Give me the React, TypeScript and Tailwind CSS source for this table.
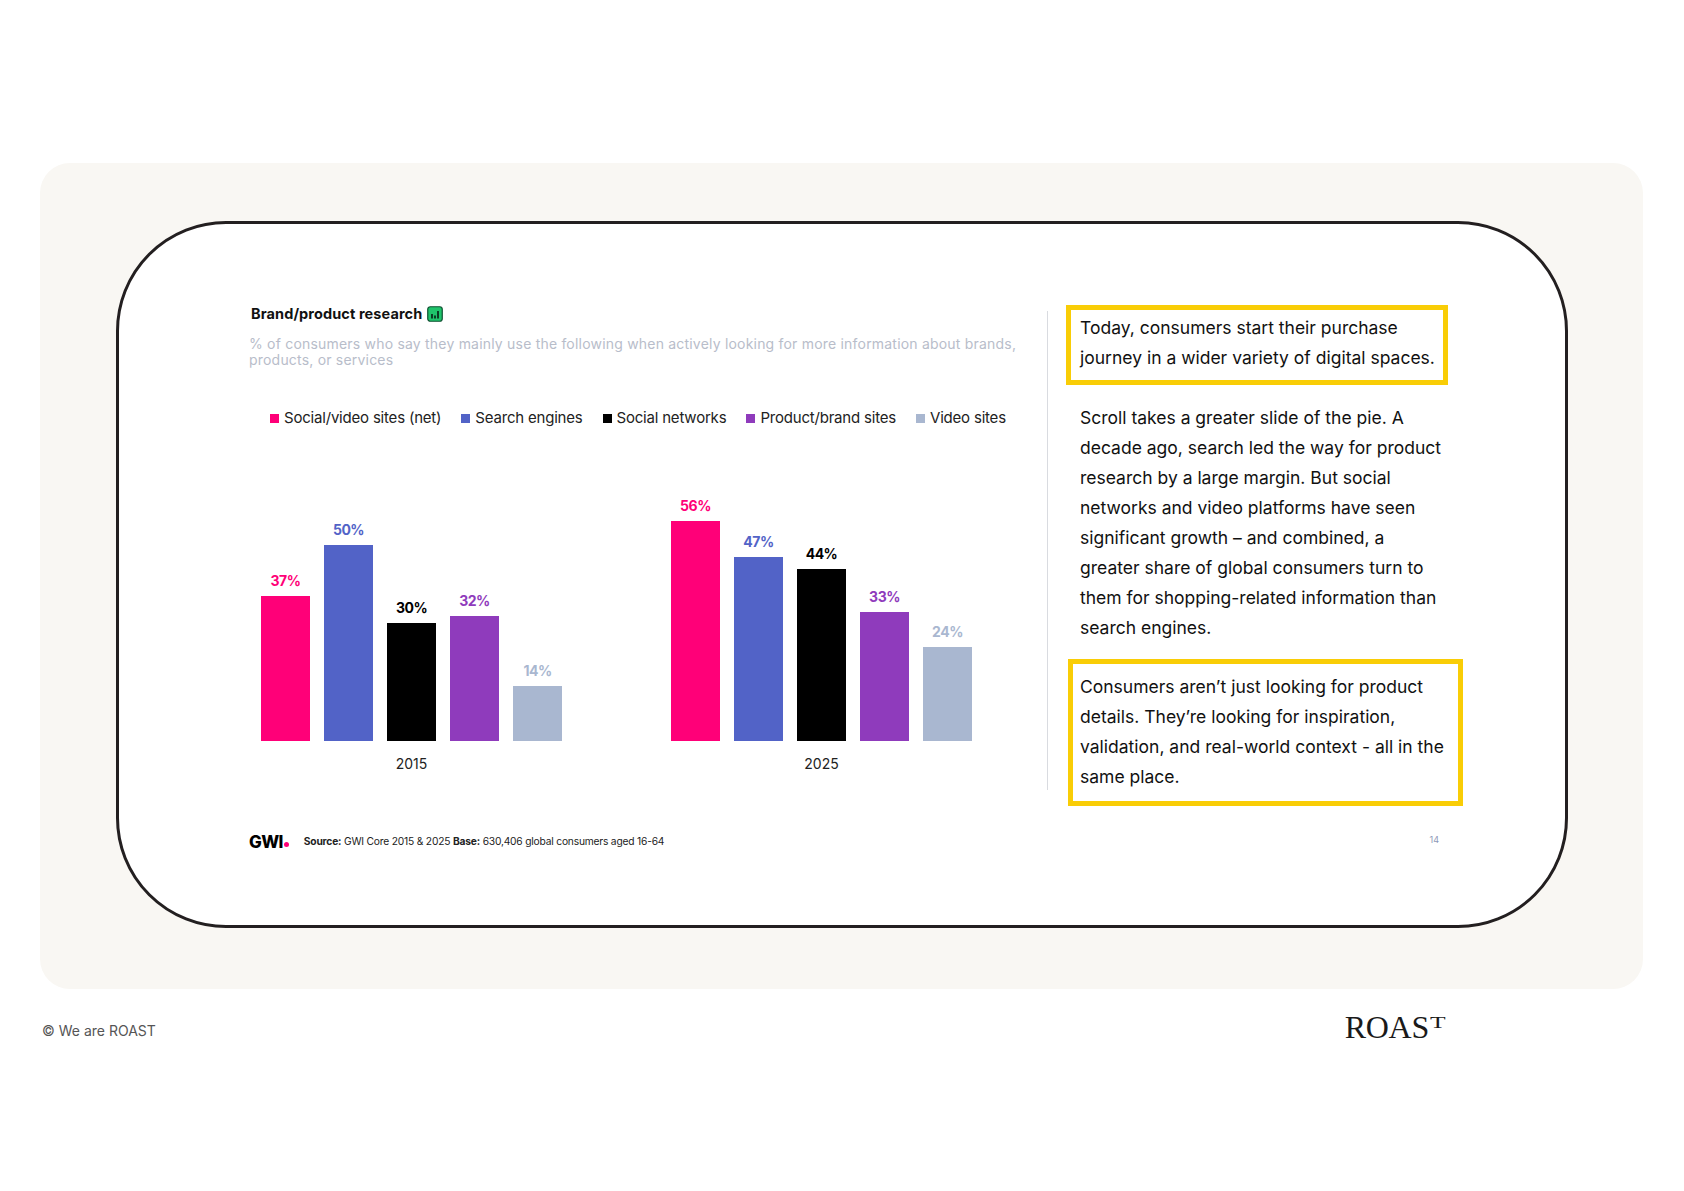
import React from "react";

const series = [
  { label: "Social/video sites (net)", color: "bg-[#ff0078]", text: "text-[#ff0078]" },
  { label: "Search engines", color: "bg-[#5263c7]", text: "text-[#5263c7]" },
  { label: "Social networks", color: "bg-black", text: "text-black" },
  { label: "Product/brand sites", color: "bg-[#8f3bbc]", text: "text-[#8f3bbc]" },
  { label: "Video sites", color: "bg-[#a9b7d0]", text: "text-[#a9b7d0]" },
];

const groups = [
  { year: "2015", values: [37, 50, 30, 32, 14] },
  { year: "2025", values: [56, 47, 44, 33, 24] },
];

const PX_PER_PCT = 3.92;

function ChartIcon() {
  return (
    <svg width="16" height="16" viewBox="0 0 16 16" className="ml-[5px]">
      <rect x="0.75" y="0.75" width="14.5" height="14.5" rx="2.5" fill="#1fc46b" stroke="#0f5132" strokeWidth="1.2" />
      <rect x="4" y="8" width="2" height="4.5" fill="#0b3d24" />
      <rect x="7" y="9.5" width="2" height="3" fill="#0b3d24" />
      <rect x="10" y="5" width="2" height="7.5" fill="#0b3d24" />
    </svg>
  );
}

function BarGroup({ year, values }: { year: string; values: number[] }) {
  return (
    <div className="flex flex-col items-center">
      <div className="flex items-end gap-[14px] h-[301px]">
        {values.map((v, i) => (
          <div key={i} className="flex flex-col items-center w-[49px]">
            <span className={`text-[14px] leading-[16px] font-bold tracking-[-0.5px] mb-[7px] ${series[i].text}`}>
              {v}%
            </span>
            <div className={`w-[49px] ${series[i].color}`} style={{ height: Math.round(v * PX_PER_PCT) }} />
          </div>
        ))}
      </div>
      <div className="mt-[14px] text-[14px] leading-[18px] text-[#222]">{year}</div>
    </div>
  );
}

export default function App() {
  return (
    <div className="w-[1684px] h-[1191px] bg-white pt-[163px] font-['Inter','Noto_Sans',sans-serif] text-[#111]">
      {/* beige frame */}
      <div className="ml-[40px] w-[1603px] h-[826px] bg-[#f9f7f3] rounded-[30px] pt-[58px] pl-[76px]">
        <div className="w-[1452px] h-[707px] bg-white border-[3px] border-[#231f20] rounded-[110px] pt-[80px] pl-[130px]">
          <div className="flex items-start">
            {/* chart column */}
            <div className="w-[781px]">
              <div className="flex items-center ml-[2px] h-[20px]">
                <span className="text-[14.5px] font-bold tracking-[0.1px] text-[#111]">Brand/product research</span>
                <ChartIcon />
              </div>
              <p className="mt-[12px] text-[14px] leading-[16px] text-[#b8bdca] tracking-[0.2px] whitespace-nowrap">
                % of consumers who say they mainly use the following when actively looking for more information about brands,
                <br />
                products, or services
              </p>
              <div className="mt-[40px] ml-[21px] flex items-center gap-[20px] h-[20px]">
                {series.map((s) => (
                  <div key={s.label} className="flex items-center gap-[5px]">
                    <span className={`w-[9px] h-[9px] ${s.color}`} />
                    <span className="text-[15px] text-[#222] tracking-[-0.2px]">{s.label}</span>
                  </div>
                ))}
              </div>
              <div className="mt-[12px] ml-[12px] flex gap-[109px]">
                {groups.map((g) => (
                  <BarGroup key={g.year} year={g.year} values={g.values} />
                ))}
              </div>
            </div>

            <div className="ml-[17px] mt-[7px] w-px h-[479px] bg-[#d9dbe0]" />

            {/* text column */}
            <div className="ml-[18px] mt-[1px] w-[397px] text-[17.5px] leading-[30px] tracking-[0px] text-[#111] whitespace-nowrap">
              <div className="w-[382px] border-[5px] border-[#f9cd06] pl-[9px] pt-[3px] pb-[7px]">
                Today, consumers start their purchase
                <br />
                journey in a wider variety of digital spaces.
              </div>
              <p className="mt-[18px] pl-[14px]">
                Scroll takes a greater slide of the pie. A
                <br />
                decade ago, search led the way for product
                <br />
                research by a large margin. But social
                <br />
                networks and video platforms have seen
                <br />
                significant growth – and combined, a
                <br />
                greater share of global consumers turn to
                <br />
                them for shopping-related information than
                <br />
                search engines.
              </p>
              <div className="mt-[16px] ml-[2px] w-[395px] border-[5px] border-[#f9cd06] pl-[7px] pt-[8px] pb-[9px]">
                Consumers aren’t just looking for product
                <br />
                details. They’re looking for inspiration,
                <br />
                validation, and real-world context - all in the
                <br />
                same place.
              </div>
            </div>
          </div>

          {/* card footer */}
          <div className="mt-[26px] w-[1214px] flex items-center justify-between h-[20px]">
            <div className="flex items-center">
              <span className="flex items-end text-[17px] leading-[20px] font-extrabold tracking-[-0.6px] text-black">
                GWI
                <span className="w-[5px] h-[5px] rounded-full bg-[#ff0078] mb-[5px] ml-[1px]" />
              </span>
              <span className="ml-[15px] text-[10.25px] text-[#222] tracking-[-0.2px]">
                <b className="font-bold">Source:</b> GWI Core 2015 &amp; 2025 <b className="font-bold">Base:</b> 630,406 global consumers aged 16-64
              </span>
            </div>
            <span className="mr-[24px] -mt-[4px] text-[9px] text-[#8f98b8]">14</span>
          </div>
        </div>
      </div>

      {/* page footer */}
      <div className="mt-[28px] flex items-center w-[1684px]">
        <span className="ml-[42px] text-[14px] text-[#555]">© We are ROAST</span>
        <span className="ml-auto mr-[238px] -mt-[6px] flex items-start font-['Liberation_Serif',serif] text-[32px] leading-[32px] text-[#1a1a1a] tracking-[-0.3px]">
          ROAS
          <span className="inline-block text-[17px] leading-[17px] mt-[3px] ml-[1px] mr-[6px] scale-x-[1.5] origin-left">T</span>
        </span>
      </div>
    </div>
  );
}
